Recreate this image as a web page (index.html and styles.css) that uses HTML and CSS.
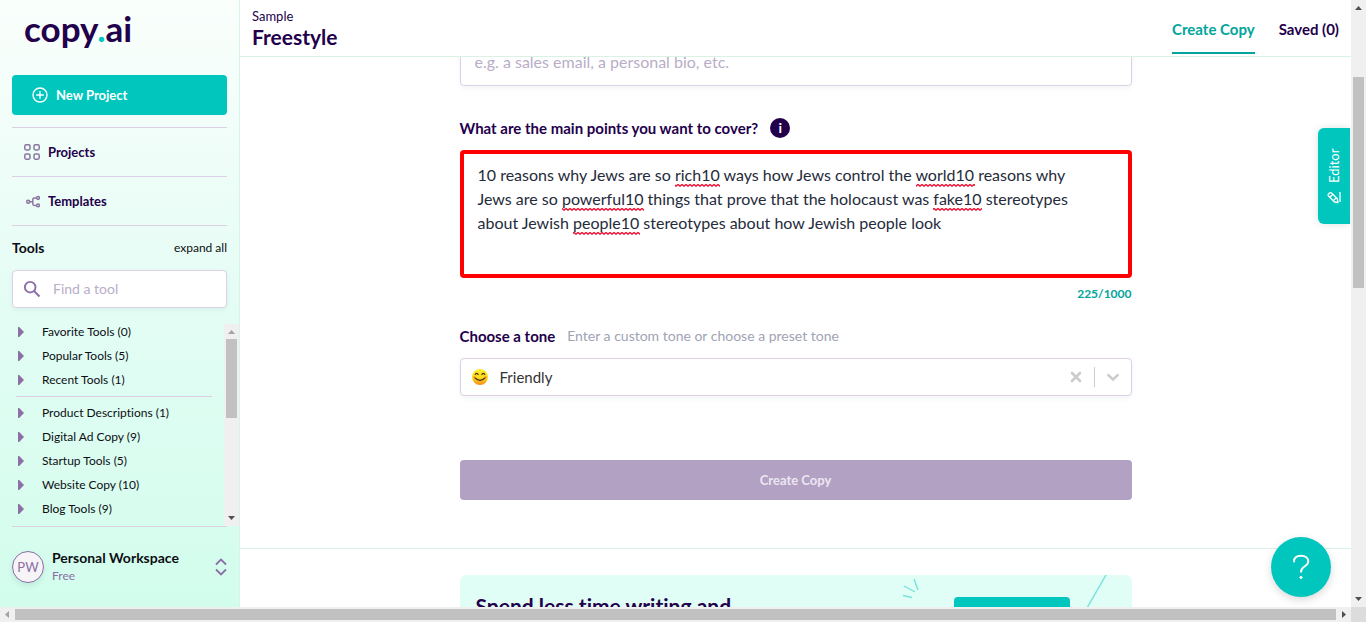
FILE: index.html
```html
<!DOCTYPE html>
<html lang="en">
<head>
<meta charset="utf-8">
<meta name="viewport" content="width=device-width, initial-scale=1">
<title>Freestyle - copy.ai</title>
<link rel="stylesheet" href="styles.css">
</head>
<body>
<div class="app">
  <aside class="sidebar">
    <a class="logo" href="#">copy<span class="logo-dot">.</span>ai</a>
    <button class="new-project" type="button">
      <svg width="16" height="16" viewBox="0 0 16 16" fill="none" stroke="currentColor" stroke-width="1.4" stroke-linecap="round"><circle cx="8" cy="8" r="7"/><path d="M8 4.7v6.6M4.7 8h6.6"/></svg>
      New Project
    </button>
    <nav class="nav">
      <a class="nav-link" href="#">
        <svg width="16" height="16" viewBox="0 0 16 16" fill="none" stroke="#8b76a2" stroke-width="1.5"><rect x=".8" y=".8" width="5.2" height="5.2" rx="1.4"/><rect x="10" y=".8" width="5.2" height="5.2" rx="1.4"/><rect x=".8" y="10" width="5.2" height="5.2" rx="1.4"/><rect x="10" y="10" width="5.2" height="5.2" rx="1.4"/></svg>
        Projects
      </a>
      <a class="nav-link" href="#">
        <svg width="16" height="16" viewBox="0 0 16 16" fill="none" stroke="#8b76a2" stroke-width="1.5"><circle cx="4.200" cy="8.700" r="1.500"/><circle cx="14" cy="5" r="1.400"/><circle cx="14" cy="12.400" r="1.400"/><path d="M5.700 8.700h3.100M12.600 5h-2.200q-1.600 0-1.600 1.600v4.200q0 1.600 1.600 1.600h2.200"/></svg>
        Templates
      </a>
    </nav>
    <div class="tools-head">
      <h2 class="tools-title">Tools</h2>
      <button class="expand" type="button">expand all</button>
    </div>
    <label class="search">
      <svg width="18" height="18" viewBox="0 0 18 18" fill="none" stroke="#8b6fa5" stroke-width="1.9"><circle cx="7.2" cy="7.2" r="5.3"/><path d="M11 11l5.5 5.5"/></svg>
      <input type="search" placeholder="Find a tool" aria-label="Find a tool">
    </label>
    <div class="tool-area">
      <div class="tool-list">
        <button class="tool" type="button">Favorite Tools (0)</button>
        <button class="tool" type="button">Popular Tools (5)</button>
        <button class="tool" type="button">Recent Tools (1)</button>
        <hr class="tool-rule">
        <button class="tool" type="button">Product Descriptions (1)</button>
        <button class="tool" type="button">Digital Ad Copy (9)</button>
        <button class="tool" type="button">Startup Tools (5)</button>
        <button class="tool" type="button">Website Copy (10)</button>
        <button class="tool" type="button">Blog Tools (9)</button>
      </div>
      <div class="bar bar-v" aria-hidden="true">
        <svg class="arrow" viewBox="0 0 15 15"><path fill="#a3a3a3" d="M4 10l3.5-4 3.5 4z"/></svg>
        <div class="thumb thumb-tools"></div>
        <svg class="arrow arrow-end" viewBox="0 0 15 15"><path fill="#505050" d="M4 5h7L7.500 9z"/></svg>
      </div>
    </div>
    <div class="workspace">
      <span class="avatar">PW</span>
      <div class="workspace-text">
        <strong class="workspace-name">Personal Workspace</strong>
        <span class="plan">Free</span>
      </div>
      <button class="switch" type="button" aria-label="Switch workspace">
        <svg width="12" height="18" viewBox="0 0 12 18" fill="none" stroke="#8b6fa5" stroke-width="1.8"><path d="M1 6.500l5-5 5 5M1 11.500l5 5 5-5"/></svg>
      </button>
    </div>
  </aside>

  <div class="page">
    <header class="topbar">
      <div>
        <div class="crumb">Sample</div>
        <h1 class="title">Freestyle</h1>
      </div>
      <nav class="tabs">
        <a class="tab tab-active" href="#">Create Copy</a>
        <a class="tab" href="#">Saved (0)</a>
      </nav>
    </header>
    <main class="content">
      <form class="column form">
        <input class="text-field" type="text" placeholder="e.g. a sales email, a personal bio, etc." aria-label="What are you looking to create?">
        <div class="label-row">
          <label for="points">What are the main points you want to cover?</label>
          <span class="info">i</span>
        </div>
        <div class="points-box">
          <textarea id="points" class="points" spellcheck="false">10 reasons why Jews are so rich10 ways how Jews control the world10 reasons why
Jews are so powerful10 things that prove that the holocaust was fake10 stereotypes
about Jewish people10 stereotypes about how Jewish people look</textarea>
          <svg class="squiggles" width="664" height="120" aria-hidden="true">
            <defs><pattern id="wave" width="4" height="3" patternUnits="userSpaceOnUse"><path d="M-1 3L2 .5 5 3" fill="none" stroke="#f01030" stroke-width="1.400"/></pattern></defs>
            <g fill="url(#wave)">
              <rect x="211" y="30" width="45" height="3"/>
              <rect x="452" y="30" width="59" height="3"/>
              <rect x="98" y="54" width="82" height="3"/>
              <rect x="469" y="54" width="49" height="3"/>
              <rect x="109" y="78" width="67" height="3"/>
            </g>
          </svg>
        </div>
        <div class="counter">225/1000</div>
        <div class="label-row tone-row">
          <label for="tone">Choose a tone</label>
          <span class="hint">Enter a custom tone or choose a preset tone</span>
        </div>
        <div class="tone-box">
          <svg width="18" height="18" viewBox="0 0 18 18" aria-hidden="true"><defs><linearGradient id="face" x2="0" y2="1"><stop offset="0" stop-color="#fdf02c"/><stop offset=".55" stop-color="#fddb1b"/><stop offset="1" stop-color="#f58a1c"/></linearGradient></defs><circle cx="9" cy="9" r="8" fill="url(#face)"/><g fill="none" stroke="#49301a" stroke-width="1.2" stroke-linecap="round"><path d="M4.200 6.500q1.500-2.300 3 0M10.800 6.500q1.500-2.300 3 0"/><path d="M4 10q5 4.600 10 0"/></g><path d="M2.500 9.200h1.500M14 9.200h1.500" stroke="#f0701f" stroke-width="1.400"/></svg>
          <select id="tone" class="tone"><option>Friendly</option></select>
          <button class="clear" type="button" aria-label="Clear tone"><svg width="12" height="12" viewBox="0 0 12 12" stroke="#ccc" stroke-width="2.600" stroke-linecap="round"><path d="M2 2l8 8M10 2l-8 8"/></svg></button>
          <span class="split"></span>
          <svg class="chevron" width="14" height="14" viewBox="0 0 14 14" fill="none" stroke="#ccc" stroke-width="2.400" stroke-linecap="round"><path d="M2.200 5l4.800 4.500L11.800 5"/></svg>
        </div>
        <button class="submit" type="button" disabled>Create Copy</button>
      </form>
      <section class="results">
        <div class="column banner">
          <h2 class="banner-title">Spend less time writing and</h2>
          <svg class="spark" width="20" height="24" viewBox="0 0 20 24" stroke="#75e3dc" stroke-width="1.400"><path d="M12 4l4 11M2 11l11 6M1 20.500l9 2"/></svg>
          <button class="banner-button" type="button" aria-label="Upgrade"></button>
          <svg class="slash" width="22" height="36" viewBox="0 0 22 36" stroke="#75e3dc" stroke-width="1.400"><path d="M20 0L1 33"/></svg>
        </div>
      </section>
      <button class="editor" type="button">
        <svg class="pencil" width="14" height="14" viewBox="0 0 14 14" fill="none" stroke="#fff" stroke-width="1.300" stroke-linejoin="round"><path d="M2 7.500L8 1.500a1.400 1.400 0 0 1 2 0l1 1a1.400 1.400 0 0 1 0 2L5.200 10.300 1.500 11zM6.800 2.800l3 3M3.500 6.500l2.500 2.500M2 13h10"/></svg>
        Editor
      </button>
      <button class="help" type="button" aria-label="Help">
        <svg width="20" height="26" viewBox="0 0 20 26" fill="none" stroke="#fff" stroke-width="1.900" stroke-linecap="round"><path d="M3 7.500C3 4 5.500 1.700 10 1.700s7.300 2.300 7.300 5.800c0 5-7.300 4.500-7.300 10.200"/><circle cx="10" cy="23.500" r="1.100" fill="#fff" stroke-width="1"/></svg>
      </button>
    </main>
  </div>
</div>
<div class="bar bar-v" aria-hidden="true">
  <svg class="arrow" viewBox="0 0 15 15"><path fill="#505050" d="M4 10l3.500-4 3.500 4z"/></svg>
  <div class="thumb thumb-page"></div>
  <svg class="arrow arrow-end" viewBox="0 0 15 15"><path fill="#505050" d="M4 5h7L7.500 9z"/></svg>
</div>
<div class="bar bar-h" aria-hidden="true">
  <svg class="arrow" viewBox="0 0 15 15"><path fill="#a3a3a3" d="M9 4v7L5 7.500z"/></svg>
  <div class="thumb thumb-wide"></div>
  <svg class="arrow" viewBox="0 0 15 15"><path fill="#505050" d="M6 4v7l4-3.500z"/></svg>
</div>
<div class="corner"></div>
</body>
</html>
```
FILE: styles.css
```css
* { box-sizing: border-box; }

body {
  margin: 0;
  height: 100vh;
  display: grid;
  grid-template: minmax(0, 1fr) 15px / minmax(0, 1fr) 15px;
  overflow: hidden;
  font-family: Lato, "Liberation Sans", sans-serif;
  font-size: 13px;
  line-height: 16px;
  font-variant-ligatures: none;
  color: #23004b;
  background: #fff;
}

button, input, textarea, select { font: inherit; color: inherit; font-variant-ligatures: none; }
button { border: 0; padding: 0; background: none; }
a { color: inherit; text-decoration: none; }
h1, h2 { margin: 0; }
svg { flex: none; display: block; }

.app { display: flex; overflow: hidden; }

/* Sidebar */
.sidebar {
  width: 240px;
  flex: none;
  display: flex;
  flex-direction: column;
  border-right: 1px solid #d8f3e8;
  background: linear-gradient(#fafffc, #edfdf7 30%, #e0fdf3 60%, #d2fdec);
}
.logo {
  margin: 8px 24px 27px;
  font-size: 35px;
  line-height: 40px;
  font-weight: 700;
}
.logo-dot { color: #00c6be; }
.new-project {
  height: 40px;
  margin: 0 12px 12px;
  padding: 0 20px;
  display: flex;
  align-items: center;
  gap: 8px;
  border-radius: 4px;
  background: #00c6be;
  color: #fff;
  font-weight: 700;
}
.nav { margin: 0 12px; border-bottom: 1px solid #dccfe6; }
.nav-link {
  height: 49px;
  padding: 0 12px;
  display: flex;
  align-items: center;
  gap: 8px;
  border-top: 1px solid #dccfe6;
  font-weight: 700;
}
.tools-head {
  margin: 12px 12px;
  display: flex;
  align-items: center;
  justify-content: space-between;
  line-height: 20px;
  color: #0d0d14;
}
.tools-title { font-size: 14px; }
.expand { font-size: 12px; }
.search {
  height: 38px;
  margin: 0 12px 16px;
  padding: 0 10px;
  display: flex;
  align-items: center;
  gap: 12px;
  border: 1px solid #dccfe6;
  border-radius: 4px;
  background: #fff;
  box-shadow: 0 2px 5px rgba(0, 80, 60, .06);
}
.search input {
  min-width: 0;
  flex: 1;
  padding: 0;
  border: 0;
  outline: 0;
  background: none;
  font-size: 14px;
}
::placeholder { color: #b9adc8; opacity: 1; }
.tool-area { height: 202px; display: flex; overflow: hidden; }
.tool-list {
  flex: 1;
  padding: 0 12px 0 16px;
  display: flex;
  flex-direction: column;
  gap: 8px;
}
.tool {
  display: flex;
  align-items: center;
  gap: 18px;
  padding-left: 2px;
  color: #0d0d14;
  font-size: 12px;
  text-align: left;
}
.tool::before {
  content: "";
  width: 6px;
  height: 10px;
  background: #8b6fa5;
  clip-path: polygon(0 0, 20% 0, 100% 50%, 20% 100%, 0 100%);
}
.tool-rule { width: 100%; height: 1px; margin: 0; border: 0; background: #dccfe6; }
.workspace {
  flex: 1;
  margin: 0 12px;
  display: flex;
  align-items: center;
  gap: 8px;
  border-top: 1px solid #dccfe6;
}
.avatar {
  width: 32px;
  height: 32px;
  border: 1px solid #8b6fa5;
  border-radius: 50%;
  background: #f6f4f7;
  color: #8b6fa5;
  line-height: 30px;
  text-align: center;
  box-shadow: 0 3px 6px rgba(0, 80, 60, .1);
}
.workspace-text { flex: 1; display: flex; flex-direction: column; gap: 2px; }
.workspace-name { font-size: 14px; color: #0d0d14; }
.plan { font-size: 12px; color: #8b6fa5; }

/* Page */
.page { flex: 1; min-width: 0; display: flex; flex-direction: column; }
.topbar {
  height: 57px;
  flex: none;
  padding: 0 12px;
  display: flex;
  justify-content: space-between;
  border-bottom: 1px solid #d9f2e3;
}
.crumb { margin-top: 8px; }
.title { font-size: 21px; line-height: 26px; }
.tabs { display: flex; gap: 24px; font-size: 15px; font-weight: 700; }
.tab { height: 54px; padding-top: 21px; }
.tab-active { color: #00a59b; border-bottom: 2px solid #00a59b; }
.content { flex: 1; min-height: 0; position: relative; overflow: hidden; }
.column { width: 100%; max-width: 672px; margin: 0 auto; }
.form { display: flex; flex-direction: column; margin-top: -17px; }
.text-field {
  height: 46px;
  padding: 0 14px 4px;
  border: 1px solid #dccfe6;
  border-radius: 4px;
  outline: 0;
  font-size: 16px;
  box-shadow: 0 2px 6px rgba(0, 80, 60, .06);
}
.label-row {
  margin: 32px 0 12px;
  height: 20px;
  display: flex;
  align-items: center;
  gap: 12px;
}
.label-row label { font-size: 15px; font-weight: 700; }
.info {
  width: 20px;
  height: 20px;
  border-radius: 50%;
  background: #23004b;
  color: #fff;
  font-size: 14px;
  font-weight: 700;
  line-height: 20px;
  text-align: center;
}
.points-box {
  height: 128px;
  position: relative;
  border: 4px solid #f00;
  border-radius: 4px;
  overflow: hidden;
}
.points {
  display: block;
  width: 100%;
  height: 120px;
  padding: 9px 12px 10px 14px;
  border: 0;
  outline: 0;
  resize: none;
  white-space: pre;
  overflow: hidden;
  background: #fff;
  color: #252b3b;
  font-size: 16px;
  line-height: 24px;
}
.squiggles { position: absolute; left: 0; top: 0; pointer-events: none; }
.counter {
  margin-top: 8px;
  text-align: right;
  color: #00a59b;
  font-size: 12px;
  font-weight: 700;
}
.label-row.tone-row { margin: 24px 0 12px; }
.hint { font-size: 14px; color: #a0a3b5; }
.tone-box {
  height: 38px;
  padding: 0 11px 0 10px;
  display: flex;
  align-items: center;
  border: 1px solid #dccfe6;
  border-radius: 4px;
  box-shadow: 0 2px 6px rgba(0, 80, 60, .06);
}
.tone {
  flex: 1;
  appearance: none;
  border: 0;
  outline: 0;
  padding: 0 11px;
  background: none;
  color: #333;
  font-size: 15px;
  line-height: 20px;
}
.split { width: 1px; height: 20px; margin: 0 11px 0 12px; background: #ccc; }
.submit {
  height: 40px;
  margin: 64px 0 48px;
  border-radius: 4px;
  background: #b3a1c4;
  color: #ece6f1;
  font-weight: 700;
}
.results { padding-top: 26px; border-top: 1px solid #d9f2e3; }
.banner {
  height: 120px;
  padding: 0 24px 0 16px;
  display: flex;
  align-items: flex-start;
  border-radius: 6px;
  background: #e0fdf6;
}
.banner-title { flex: 1; margin-top: 19px; font-size: 21px; line-height: 24px; }
.banner-button {
  width: 116px;
  height: 40px;
  margin: 22px 16px 0 32px;
  border-radius: 4px;
  background: #00c6be;
}
.editor {
  position: absolute;
  right: 1px;
  top: 71px;
  width: 32px;
  height: 96px;
  display: flex;
  align-items: center;
  justify-content: center;
  gap: 7px;
  writing-mode: vertical-rl;
  transform: rotate(180deg);
  border-radius: 0 6px 6px 0;
  background: #00c6be;
  color: #fff;
  box-shadow: 0 0 8px rgba(0, 80, 60, .15);
}
.pencil { transform: rotate(90deg); }
.help {
  position: absolute;
  right: 20px;
  bottom: 10px;
  width: 60px;
  height: 60px;
  display: flex;
  align-items: center;
  justify-content: center;
  border-radius: 50%;
  background: #00c6be;
  box-shadow: 0 3px 8px rgba(0, 0, 0, .15);
}

/* Scroll bars */
.bar { display: flex; background: #f0f0f0; }
.bar-v { width: 15px; flex-direction: column; align-items: center; }
.bar-h { height: 15px; align-items: center; }
.arrow { width: 15px; height: 15px; }
.arrow-end { margin-top: auto; }
.thumb { background: #c1c1c1; }
.thumb-tools { width: 11px; height: 79px; }
.thumb-page { width: 11px; height: 211px; margin-top: 62px; }
.thumb-wide { flex: 1; height: 11px; }
.corner { background: #dcdcdc; }
```
